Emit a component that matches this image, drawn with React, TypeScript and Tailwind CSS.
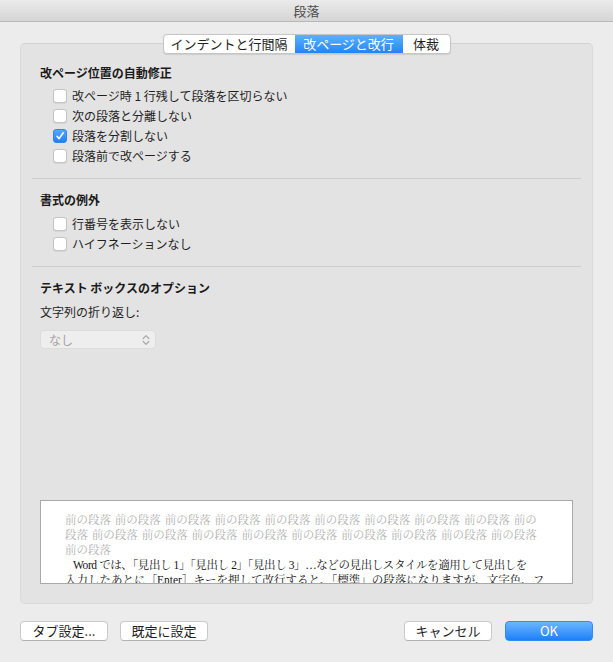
const sans = "font-['Noto_Sans_CJK_JP',_'Noto_Sans',_sans-serif]";

type CheckRowProps = {
  label: string;
  checked?: boolean;
};

const CheckRow = ({ label, checked }: CheckRowProps) => (
  <div className="flex h-[20px] items-center pl-[13px]">
    {checked ? (
      <span className="flex h-[14px] w-[14px] items-center justify-center rounded-[3px] border border-[#2f86f0] bg-gradient-to-b from-[#55a8fb] to-[#1b7ff4]">
        <svg width="10" height="10" viewBox="0 0 10 10" fill="none">
          <path d="M2 5.3 L4.1 7.6 L8.2 1.8" stroke="white" strokeWidth="1.6" strokeLinecap="round" strokeLinejoin="round" />
        </svg>
      </span>
    ) : (
      <span className="h-[14px] w-[14px] rounded-[3px] border border-[#c4c4c4] bg-white shadow-[0_0.5px_0.5px_rgba(0,0,0,0.12)]" />
    )}
    <span className="ml-[5px] text-[12px] leading-none text-[#1f1f1f]">{label}</span>
  </div>
);

const Heading = ({ children }: { children: string }) => (
  <div className="h-[18px] text-[12px] font-bold leading-[18px] text-[#1a1a1a]">{children}</div>
);

const Button = ({ label, primary }: { label: string; primary?: boolean }) => (
  <button
    className={
      primary
        ? "flex h-[20px] w-[88px] items-center justify-center rounded-[4px] border border-[#2f8cf6] bg-gradient-to-b from-[#6ab6fd] to-[#1a80fa] text-[13px] text-white"
        : "flex h-[20px] w-[88px] items-center justify-center rounded-[4px] border border-[#c9c9c9] border-b-[#b3b3b3] bg-white text-[13px] text-[#1f1f1f]"
    }
  >
    {label}
  </button>
);

export default function App() {
  return (
    <div className={`${sans} flex h-[662px] w-[613px] flex-col bg-[#ececec]`}>
      <div className="flex h-[22px] items-center justify-center border-b border-[#b8b8b8] bg-gradient-to-b from-[#ebebeb] to-[#d5d5d5] text-[13px] text-[#4d4d4d]">
        段落
      </div>

      <div className="relative z-10 mt-[12px] flex h-[20px] self-center overflow-hidden rounded-[4px] border border-[#c6c6c6] bg-white text-[13px] shadow-[0_0.5px_1px_rgba(0,0,0,0.1)]">
        <div className="flex w-[131px] items-center justify-center text-[#1f1f1f]">インデントと行間隔</div>
        <div className="flex w-[108px] items-center justify-center bg-gradient-to-b from-[#5db0fc] to-[#1d85f6] text-white">改ページと改行</div>
        <div className="flex w-[47px] items-center justify-center text-[#1f1f1f]">体裁</div>
      </div>

      <div className="mx-[20px] -mt-[11px] flex h-[561px] flex-col rounded-[5px] border border-[#d9d9d9] border-t-[#d2d2d2] bg-[#e3e3e3] px-[19px] pb-[19px] pt-[20px]">
        <Heading>改ページ位置の自動修正</Heading>
        <div className="mt-[4px]">
          <CheckRow label="改ページ時 1 行残して段落を区切らない" />
          <CheckRow label="次の段落と分離しない" />
          <CheckRow label="段落を分割しない" checked />
          <CheckRow label="段落前で改ページする" />
        </div>
        <div className="-mx-[8px] mb-[12px] mt-[12px] h-px bg-[#cdcdcd]" />

        <Heading>書式の例外</Heading>
        <div className="mt-[5px]">
          <CheckRow label="行番号を表示しない" />
          <CheckRow label="ハイフネーションなし" />
        </div>
        <div className="-mx-[8px] mb-[12px] mt-[12px] h-px bg-[#cdcdcd]" />

        <Heading>テキスト ボックスのオプション</Heading>
        <div className="mt-[6px] h-[18px] text-[12px] leading-[18px] text-[#1f1f1f]">文字列の折り返し:</div>
        <div className="mt-[9px] flex h-[19px] w-[116px] items-center justify-between rounded-[4px] border border-[#dcdcdc] bg-[#eeeeee] pl-[8px] pr-[5px] text-[12px] text-[#a3a3a3]">
          <span>なし</span>
          <svg width="8" height="12" viewBox="0 0 8 12" fill="none">
            <path d="M1.2 4.5 L4 1.7 L6.8 4.5" stroke="#a8a8a8" strokeWidth="1.2" strokeLinecap="round" strokeLinejoin="round" />
            <path d="M1.2 7.5 L4 10.3 L6.8 7.5" stroke="#a8a8a8" strokeWidth="1.2" strokeLinecap="round" strokeLinejoin="round" />
          </svg>
        </div>

        <div className="mt-auto h-[84px] overflow-hidden border border-[#a9a9a9] bg-white pl-[24px] pt-[12px] font-['Liberation_Serif',_'Noto_Serif_CJK_JP',_'Noto_Sans_CJK_JP',_serif] text-[11.5px] leading-[15px]">
          <div className="whitespace-nowrap text-[#b0b0b0] [word-spacing:1px]">
            前の段落 前の段落 前の段落 前の段落 前の段落 前の段落 前の段落 前の段落 前の段落 前の
          </div>
          <div className="whitespace-nowrap text-[#b0b0b0] [word-spacing:1px]">
            段落 前の段落 前の段落 前の段落 前の段落 前の段落 前の段落 前の段落 前の段落 前の段落
          </div>
          <div className="whitespace-nowrap text-[#b0b0b0]">前の段落</div>
          <div className="whitespace-nowrap pl-[8px] tracking-[-0.4px] text-[#111]">
            Word では、「見出し 1」「見出し 2」「見出し 3」…などの見出しスタイルを適用して見出しを
          </div>
          <div className="whitespace-nowrap text-[#111]">
            入力したあとに［Enter］キーを押して改行すると、「標準」の段落になりますが、文字色、フ
          </div>
        </div>
      </div>

      <div className="mx-[20px] mt-[17px] flex items-center">
        <Button label="タブ設定..." />
        <div className="ml-[12px]">
          <Button label="既定に設定" />
        </div>
        <div className="ml-auto">
          <Button label="キャンセル" />
        </div>
        <div className="ml-[13px]">
          <Button label="OK" primary />
        </div>
      </div>
    </div>
  );
}
